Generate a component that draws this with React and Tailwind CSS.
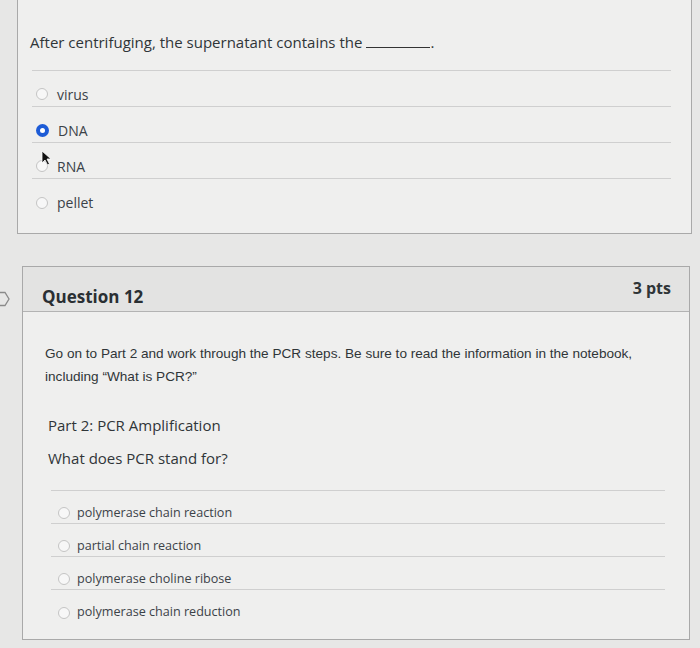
import React from 'react';

const font = { fontFamily: '"Open Sans", "Noto Sans", sans-serif' };

const Radio = ({ checked }) =>
    checked ? (
        <span className="flex h-[13px] w-[13px] shrink-0 items-center justify-center rounded-full bg-[#1d5bd6]">
            <span className="h-[5px] w-[5px] rounded-full bg-white" />
        </span>
    ) : (
        <span className="h-[12px] w-[12px] shrink-0 rounded-full border border-[#c4c4c4] bg-[#f7f7f7]" />
    );

const Option = ({ label, checked, last, row, text }) => (
    <div className={`flex items-center ${row} ${last ? '' : 'border-b border-[#cfcfcf]'}`}>
        <Radio checked={checked} />
        <span className={`${text} text-[#3b4248]`}>{label}</span>
    </div>
);

const Cursor = () => (
    <svg width="12" height="16" viewBox="0 0 12 16" className="absolute left-[23px] top-[151px]">
        <path d="M1 1 L1 13 L4 10 L6.5 15 L8.5 14 L6 9 L10 9 Z" fill="#111" stroke="#fff" strokeWidth="0.8" />
    </svg>
);

export default function App() {
    const first = ['virus', 'DNA', 'RNA', 'pellet'];
    const second = [
        'polymerase chain reaction',
        'partial chain reaction',
        'polymerase choline ribose',
        'polymerase chain reduction',
    ];

    return (
        <div className="relative h-[648px] w-[700px] overflow-hidden bg-[#e7e7e6]" style={font}>
            {/* previous question */}
            <div className="relative ml-[17px] mt-[-2px] h-[236px] w-[675px] border border-[#a9a9a9] bg-[#efefee] px-[12px]">
                <p className="mt-[32px] text-[15px] text-[#2f3538]">
                    After centrifuging, the supernatant contains the
                    <span className="ml-[4px] inline-block w-[64px] border-b border-[#333]" />.
                </p>
                <div className="mt-[16px] mr-[8px] ml-[2px] border-t border-[#cfcfcf]">
                    {first.map((o, i) => (
                        <Option
                            key={o}
                            label={o}
                            checked={o === 'DNA'}
                            last={i === first.length - 1}
                            row="h-[36px] gap-[9px] pl-[4px] pt-[12px]"
                            text="text-[14px]"
                        />
                    ))}
                </div>
                <Cursor />
            </div>

            {/* question flag */}
            <svg width="14" height="16" viewBox="0 0 14 16" className="absolute left-[-3px] top-[291px]">
                <path d="M1 1.5 H8 L12 8 L8 14.5 H1" fill="none" stroke="#8a8a8a" strokeWidth="1.3" />
            </svg>

            {/* question 12 */}
            <div className="ml-[22px] mt-[32px] h-[374px] w-[668px] border border-[#a9a9a9] bg-[#efefee]">
                <div className="flex h-[45px] items-start justify-between border-b border-[#b3b3b3] bg-[#e3e3e2] pl-[19px] pr-[18px]">
                    <h2 className="mt-[17px] text-[17px] font-bold text-[#2a2f33]">Question 12</h2>
                    <span className="mt-[9px] text-[16px] font-bold text-[#2f3538]">3 pts</span>
                </div>
                <div className="px-[22px]">
                    <p
                        className="mt-[30px] text-[13.6px] leading-[23px] text-[#2f3538]"
                        style={{ fontFamily: '"Liberation Sans", Arial, sans-serif' }}
                    >
                        Go on to Part 2 and work through the PCR steps. Be sure to read the information in the notebook,
                        <br />
                        including “What is PCR?”
                    </p>
                    <p className="mt-[26px] ml-[3px] text-[15px] text-[#2f3538]">Part 2: PCR Amplification</p>
                    <p className="mt-[10px] ml-[3px] text-[15px] text-[#2f3538]">What does PCR stand for?</p>
                    <div className="mt-[21px] ml-[6px] mr-[2px] border-t border-[#cfcfcf]">
                        {second.map((o, i) => (
                            <Option
                                key={o}
                                label={o}
                                last={i === second.length - 1}
                                row="h-[33px] gap-[7px] pl-[7px] pt-[12px]"
                                text="text-[12.6px]"
                            />
                        ))}
                    </div>
                </div>
            </div>
        </div>
    );
}
